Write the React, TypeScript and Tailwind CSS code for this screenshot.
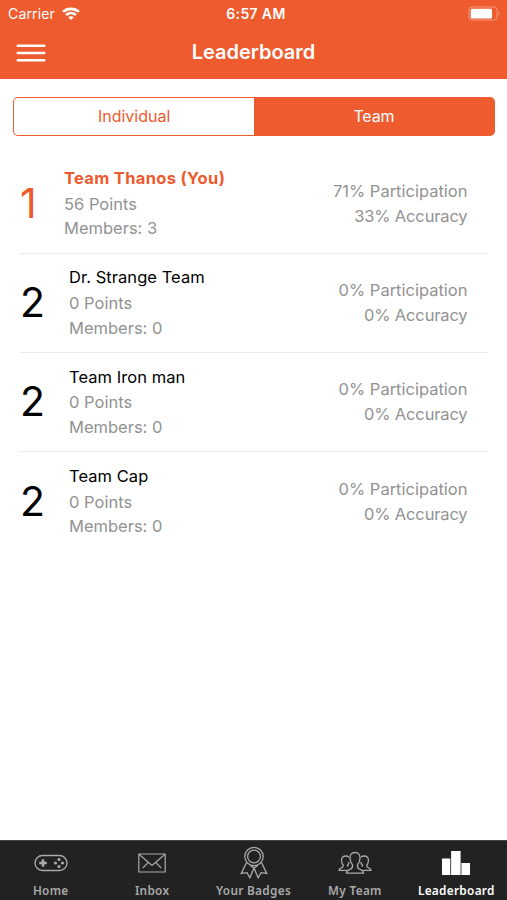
import type { ReactNode } from "react";

interface Team {
  rank: number;
  name: string;
  points: number;
  members: number;
  participation: number;
  accuracy: number;
  you?: boolean;
}

const teams: Team[] = [
  { rank: 1, name: "Team Thanos (You)", points: 56, members: 3, participation: 71, accuracy: 33, you: true },
  { rank: 2, name: "Dr. Strange Team", points: 0, members: 0, participation: 0, accuracy: 0 },
  { rank: 2, name: "Team Iron man", points: 0, members: 0, participation: 0, accuracy: 0 },
  { rank: 2, name: "Team Cap", points: 0, members: 0, participation: 0, accuracy: 0 },
];

function StatusBar() {
  return (
    <div className="grid grid-cols-3 items-center h-[27px] pl-2 pr-[6px] text-[14px] leading-[27px]">
      <div className="flex items-center gap-[7px]">
        <span className="tracking-[0.15px]">Carrier</span>
        <svg width="18" height="14" viewBox="0 0 18 14" fill="none" stroke="white" strokeWidth="2.6">
          <path d="M1 4.9C5.4 .8 12.6 .8 17 4.9" />
          <path d="M4.1 8.1C7 5.5 11 5.5 13.9 8.1" />
          <path d="M9 13L6.2 10.2C7.8 8.8 10.2 8.8 11.8 10.2Z" fill="white" stroke="none" />
        </svg>
      </div>
      <span className="text-center font-semibold text-[14px] tracking-[0.35px] pl-[3px]">6:57 AM</span>
      <svg className="justify-self-end" width="33" height="15" viewBox="0 0 33 15" fill="none">
        <rect x="1" y="1" width="28" height="13" rx="3" stroke="#f49a7c" />
        <rect x="2.7" y="2.8" width="21.3" height="9.6" rx="1.2" fill="white" />
        <path d="M30.5 5.5C32 6.2 32 9 30.5 9.7Z" fill="#f49a7c" />
      </svg>
    </div>
  );
}

function TeamRow({ team }: { team: Team }) {
  return (
    <li className="flex items-center h-[99.2px] border-b border-[#ececec] last:border-b-0 pr-[20.5px]">
      <span
        className={`text-[41px] leading-none tracking-[-0.5px] shrink-0 ${
          team.you ? "w-[44px] text-[#ee5a2d]" : "w-[49px] text-black"
        }`}
      >
        {team.rank}
      </span>
      <div className="flex-1 text-[16.5px] leading-[24.6px] text-[#929292]">
        <h2 className={team.you ? "font-bold tracking-[0.32px] text-[#ee5a2d]" : "text-black tracking-[0.05px]"}>
          {team.name}
        </h2>
        <p className="pt-px">{team.points} Points</p>
        <p>Members: {team.members}</p>
      </div>
      <div className="text-right text-[16.5px] leading-[24.6px] text-[#929292]">
        <p>{team.participation}% Participation</p>
        <p className="tracking-[-0.15px]">{team.accuracy}% Accuracy</p>
      </div>
    </li>
  );
}

function TabItem({ label, active, children }: { label: string; active?: boolean; children: ReactNode }) {
  return (
    <button className={`flex-1 flex flex-col items-center justify-start whitespace-nowrap ${active ? "text-white" : "text-[#a9a9a9]"}`}>
      <span className="flex items-center justify-center h-[42px] pt-[2px]">{children}</span>
      <span className="font-['Noto_Sans',sans-serif] font-semibold text-[11.8px] leading-[14px] tracking-[0.3px]">
        {label}
      </span>
    </button>
  );
}

export default function App() {
  return (
    <div className="flex flex-col h-screen bg-white font-['Inter',sans-serif]">
      <header className="h-[79px] bg-[#ee5b2e] text-white">
        <StatusBar />
        <div className="grid grid-cols-[60px_1fr_60px] items-center h-[51px]">
          <button className="pl-4">
            <svg width="30" height="20" viewBox="0 0 30 20" stroke="white" strokeWidth="2.4" strokeLinecap="round">
              <path d="M1.7 2.8H28.3M1.7 10H28.3M1.7 17.2H28.3" />
            </svg>
          </button>
          <h1 className="text-center text-[20px] font-semibold -mt-px">Leaderboard</h1>
        </div>
      </header>

      <main className="flex-1">
        <div className="flex mt-[18px] ml-[13px] mr-3 h-[39px] p-[1.3px] bg-[#ee5b2e] rounded-[5px] text-[16px]">
          <button className="flex-1 pb-px bg-white rounded-l-[4px] text-[#ee5b2e]">Individual</button>
          <button className="flex-1 pb-px text-white tracking-[-0.2px]">Team</button>
        </div>

        <ul className="mt-[18.5px] ml-5 mr-[19px]">
          {teams.map((team) => (
            <TeamRow key={team.name} team={team} />
          ))}
        </ul>
      </main>

      <nav className="flex h-[60px] bg-[#222222] border-t border-[#444444]">
        <TabItem label="Home">
          <svg width="34" height="18" viewBox="0 0 34 18" fill="none" stroke="currentColor">
            <rect x="1" y="1.5" width="32" height="15" rx="7.5" strokeWidth="1.3" />
            <path d="M9 5.2V12.8M5.2 9H12.8" strokeWidth="2.6" />
            <g fill="currentColor" stroke="none">
              <circle cx="25" cy="5.5" r="1.6" />
              <circle cx="25" cy="12.5" r="1.6" />
              <circle cx="21.5" cy="9" r="1.6" />
              <circle cx="28.5" cy="9" r="1.6" />
            </g>
          </svg>
        </TabItem>
        <TabItem label="Inbox">
          <svg width="28" height="20" viewBox="0 0 28 20" fill="none" stroke="currentColor" strokeWidth="1.2">
            <path d="M.8 1H27.2V19H.8Z" />
            <path d="M1 1.2L14 12.5L27 1.2M4.8 15L10.3 9.4M23.2 15L17.7 9.4" />
          </svg>
        </TabItem>
        <TabItem label="Your Badges">
          <svg width="28" height="34" viewBox="0 0 28 34" fill="none" stroke="currentColor" strokeWidth="1.3">
            <circle cx="14" cy="10.5" r="9.2" />
            <circle cx="14" cy="10.5" r="6.4" />
            <path d="M6.5 16.5L1.3 27.5L7 26.6L9.9 31.8L14 22L18.1 31.8L21 26.6L26.7 27.5L21.5 16.5" />
            <path d="M10.2 19.5L14 22L17.8 19.5" />
          </svg>
        </TabItem>
        <TabItem label="My Team">
          <svg width="34" height="24" viewBox="0 0 34 24" fill="none" stroke="currentColor" strokeWidth="1.3" strokeLinejoin="round">
            <path d="M17 1.5C13.4 1.5 11.8 4 12 7.2C12.1 10.2 13.2 12.3 14.5 13.8C14.8 16.2 14.4 17.4 12.5 18.2C10.3 19 8.6 19.3 8.4 22.2H25.6C25.4 19.3 23.7 19 21.5 18.2C19.6 17.4 19.2 16.2 19.5 13.8C20.8 12.3 21.9 10.2 22 7.2C22.2 4 20.6 1.5 17 1.5Z" />
            <path d="M10.8 6.2C9.9 5.2 8.7 4.9 7.4 5C4.4 5.2 3.3 7.3 3.6 10C3.8 12.1 4.5 13.5 5.3 14.5C5.6 17.8 1.3 15.8 1 19.3H8.8M10.2 15.7L9.4 14.5C10.2 13.5 10.8 12.5 11.2 11" />
            <path d="M23.2 6.2C24.1 5.2 25.3 4.9 26.6 5C29.6 5.2 30.7 7.3 30.4 10C30.2 12.1 29.5 13.5 28.7 14.5C28.4 17.8 32.7 15.8 33 19.3H25.2M23.8 15.7L24.6 14.5C23.8 13.5 23.2 12.5 22.8 11" />
          </svg>
        </TabItem>
        <TabItem label="Leaderboard" active>
          <svg width="30" height="26" viewBox="0 0 30 26" fill="currentColor">
            <path d="M1 8.5H9.3V25H1ZM10.1 1H19.6V25H10.1ZM20.4 13H29V25H20.4Z" />
          </svg>
        </TabItem>
      </nav>
    </div>
  );
}
